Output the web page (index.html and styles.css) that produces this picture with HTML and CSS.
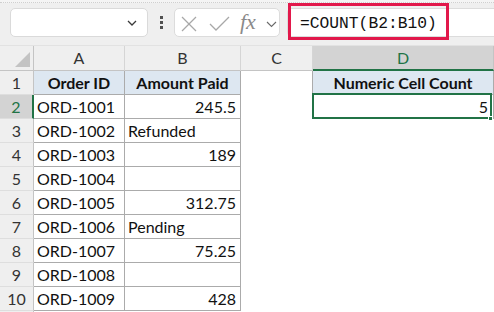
FILE: index.html
```html
<!DOCTYPE html>
<html>
<head>
<meta charset="utf-8">
<link rel="stylesheet" href="styles.css">
</head>
<body>
<div class="app">
  <div class="strip"></div>
  <div class="toolbar">
    <div class="namebox">
      <svg class="nb-chev" width="10" height="6" viewBox="0 0 10 6"><polyline points="1,1 5,5 9,1" fill="none" stroke="#3a3a3a" stroke-width="1.3"/></svg>
    </div>
    <div class="dots"><span></span><span></span><span></span></div>
    <div class="fxbox">
      <svg width="106" height="29" viewBox="0 0 106 29">
        <line x1="8" y1="9" x2="22" y2="23" stroke="#a8a8a8" stroke-width="1.3"/>
        <line x1="22" y1="9" x2="8" y2="23" stroke="#a8a8a8" stroke-width="1.3"/>
        <polyline points="36,16 42,22 55,9" fill="none" stroke="#a8a8a8" stroke-width="1.3"/>
        <text x="66" y="21" class="fxt">fx</text>
        <polyline points="93,14 97.5,18.5 102,14" fill="none" stroke="#6a6a6a" stroke-width="1.1"/>
      </svg>
    </div>
    <div class="formula">
      <span class="ftext">=COUNT(B2:B10)</span>
      <div class="mark"></div>
    </div>
  </div>
  <div class="sheet">
    <div class="corner"><svg width="34" height="24" viewBox="0 0 34 24"><polygon points="15,21 30,21 30,6" fill="#c3c3c3"/></svg></div>
    <div class="ch">A</div>
    <div class="ch">B</div>
    <div class="ch">C</div>
    <div class="ch sel">D</div>

    <div class="rh">1</div>
    <div class="c t hd">Order ID</div>
    <div class="c t hd">Amount Paid</div>
    <div class="c edge"></div>
    <div class="c t hd">Numeric Cell Count</div>

    <div class="rh rsel">2</div>
    <div class="c t">ORD-1001</div>
    <div class="c t num">245.5</div>
    <div class="c edge"></div>
    <div class="c t num active">5<span class="handle"></span></div>

    <div class="rh">3</div>
    <div class="c t">ORD-1002</div>
    <div class="c t">Refunded</div>
    <div class="c"></div>
    <div class="c"></div>

    <div class="rh">4</div>
    <div class="c t">ORD-1003</div>
    <div class="c t num">189</div>
    <div class="c"></div>
    <div class="c"></div>

    <div class="rh">5</div>
    <div class="c t">ORD-1004</div>
    <div class="c t"></div>
    <div class="c"></div>
    <div class="c"></div>

    <div class="rh">6</div>
    <div class="c t">ORD-1005</div>
    <div class="c t num">312.75</div>
    <div class="c"></div>
    <div class="c"></div>

    <div class="rh">7</div>
    <div class="c t">ORD-1006</div>
    <div class="c t">Pending</div>
    <div class="c"></div>
    <div class="c"></div>

    <div class="rh">8</div>
    <div class="c t">ORD-1007</div>
    <div class="c t num">75.25</div>
    <div class="c"></div>
    <div class="c"></div>

    <div class="rh">9</div>
    <div class="c t">ORD-1008</div>
    <div class="c t"></div>
    <div class="c"></div>
    <div class="c"></div>

    <div class="rh">10</div>
    <div class="c t">ORD-1009</div>
    <div class="c t num">428</div>
    <div class="c"></div>
    <div class="c"></div>

    <div class="rh"></div>
    <div class="c"></div>
    <div class="c"></div>
    <div class="c"></div>
    <div class="c"></div>
  </div>
</div>
</body>
</html>
```

FILE: styles.css
```css
* { box-sizing: border-box; }
html, body { margin: 0; padding: 0; background: #ffffff; }
body { width: 494px; height: 312px; overflow: hidden; font-family: Lato, "Open Sans", sans-serif; }
.app { width: 494px; height: 312px; overflow: hidden; }

.strip { height: 3px; background: #f4f4f4; border-bottom: 1px dotted #cfcfcf; }
.toolbar {
  height: 43px;
  background: #efefef;
  display: flex;
  align-items: flex-start;
  padding-top: 5px;
  border-bottom: 1px solid #e2e2e2;
}
.namebox {
  margin-left: 10px;
  width: 138px;
  height: 29px;
  background: #fff;
  border: 1px solid #dadada;
  border-radius: 5px;
  display: flex;
  align-items: center;
  justify-content: flex-end;
  padding-right: 10px;
}
.nb-chev { display: block; }
.dots {
  margin-left: 12px;
  width: 3px;
  height: 29px;
  display: flex;
  flex-direction: column;
  justify-content: center;
  gap: 2px;
}
.dots span { display: block; width: 3px; height: 3px; background: #505050; }
.fxbox {
  margin-left: 11px;
  width: 106px;
  height: 29px;
  background: #fff;
  border: 1px solid #dcdcdc;
  border-radius: 5px;
  overflow: hidden;
}
.fxbox svg { display: block; margin: -1px 0 0 -1px; }
.fxt { font-family: "Liberation Serif", serif; font-style: italic; font-size: 22px; fill: #8a8a8a; }
.formula {
  position: relative;
  margin-left: 7px;
  flex: 1;
  height: 29px;
  background: #fff;
  border: 1px solid #dcdcdc;
  border-right: none;
  border-radius: 5px 0 0 5px;
  padding-left: 12px;
  display: flex;
  align-items: center;
}
.ftext { font-family: "Liberation Mono", monospace; font-size: 16.3px; color: #111; line-height: 20px; padding-top: 2px; }
.mark {
  position: absolute;
  left: 0px;
  top: -6px;
  width: 161px;
  height: 37px;
  border: 3px solid #e2184b;
}

.sheet {
  display: grid;
  grid-template-columns: 34px 91px 116px 72px 181px;
  grid-template-rows: 25px repeat(10, 24px) 24px;
  font-size: 16px;
  color: #111;
}
.corner { background: #efefef; border-right: 1px solid #c4c4c4; border-bottom: 1px solid #c4c4c4; }
.corner svg { display: block; }
.ch {
  background: #efefef;
  border-right: 1px solid #d5d5d5;
  border-bottom: 1px solid #c4c4c4;
  text-align: center;
  line-height: 24px;
  color: #333;
}
.ch.sel { background: #d3d3d3; color: #217346; border-bottom: 2px solid #217346; border-right: 1px solid #c4c4c4; }
.rh {
  background: #efefef;
  border-right: 1px solid #c4c4c4;
  border-bottom: 1px solid #dedede;
  text-align: center;
  line-height: 22px;
  padding-top: 1px;
  color: #333;
}
.rh.rsel { background: #d3d3d3; color: #217346; border-right: 2px solid #217346; padding-right: 0; }
.c {
  line-height: 22px;
  padding: 1px 3px 0 3px;
  white-space: nowrap;
  overflow: visible;
}
.t { border-right: 1px solid #ababab; border-bottom: 1px solid #ababab; }
.edge { border-right: 1px solid #ababab; }
.hd { background: #dde7f1; font-weight: bold; text-align: center; padding: 1px 0 0 0; }
.num { text-align: right; padding-right: 4px; }
.active { position: relative; padding-right: 5px; }
.active::after {
  content: "";
  position: absolute;
  left: -1px;
  top: -2px;
  right: 1px;
  bottom: -1px;
  border: 2px solid #217346;
}
.handle {
  position: absolute;
  right: 0px;
  bottom: -3px;
  width: 5px;
  height: 5px;
  background: #217346;
  border: 1px solid #fff;
  z-index: 2;
}
```
